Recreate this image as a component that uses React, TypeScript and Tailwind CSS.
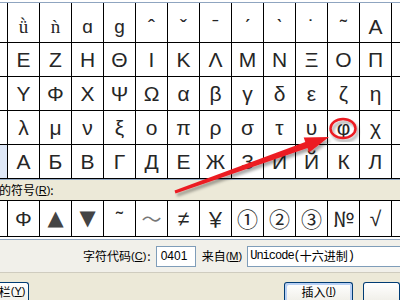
const GRID: string[][] = [
  ["ǜ", "ǹ", "ɑ", "ɡ", "ˆ", "ˇ", "ˉ", "ˊ", "ˋ", "˙", "˜", "Α"],
  ["Ε", "Ζ", "Η", "Θ", "Ι", "Κ", "Λ", "Μ", "Ν", "Ξ", "Ο", "Π"],
  ["Υ", "Φ", "Χ", "Ψ", "Ω", "α", "β", "γ", "δ", "ε", "ζ", "η"],
  ["λ", "μ", "ν", "ξ", "ο", "π", "ρ", "σ", "τ", "υ", "φ", "χ"],
  ["А", "Б", "В", "Г", "Д", "Е", "Ж", "З", "И", "Й", "К", "Л"],
];

const RECENT = ["Φ", "▲", "▼", "˜", "〜", "≠", "￥", "①", "②", "③", "№", "√"];

const glyphFont = "font-['Liberation_Sans','DejaVu_Sans',sans-serif]";
const cjkFont = "font-['Noto_Sans_CJK_SC',sans-serif]";

function Key({ k }: { k: string }) {
  // underlined access key, old dialog style
  return (
    <span className="font-['Liberation_Sans',sans-serif] text-[11px]">
      (<span className="underline">{k}</span>)
    </span>
  );
}

function recentClass(i: number) {
  if (i === 1 || i === 2) return "font-['DejaVu_Sans',sans-serif] text-[21px] text-[#444]";
  if (i === 4) return `${cjkFont} text-[20px] text-[#777]`;
  if (i >= 6 && i <= 10) return `${cjkFont} text-[21px]`;
  return `${glyphFont} text-[21px]`;
}

export default function App() {
  return (
    <div className="relative w-[400px] h-[300px] overflow-hidden bg-[#ece9d8] text-[#262626]">
      <div className="h-[2px] bg-white" />

      {/* character table */}
      <div className="bg-white border-t border-b border-[#8fa5c0]">
        {GRID.map((row, r) => (
          <div
            key={r}
            className={`flex border-b border-black ${r === 0 ? "h-[40px]" : "h-[34px]"}`}
          >
            <div className={`w-[7px] ${r === 4 ? "bg-[#dfe8f7]" : ""}`} />
            {row.map((ch, c) => (
              <div
                key={c}
                className={`w-[32px] border-l border-black flex items-center justify-center leading-none ${
                  r === 0 ? "pt-[8px]" : ""
                } ${
                  r === 0 && c < 2
                    ? "font-['Liberation_Serif',serif] text-[19px]"
                    : r === 0 && c < 4
                    ? `${glyphFont} text-[19px]`
                    : `${glyphFont} text-[21px]`
                }`}
              >
                {ch}
              </div>
            ))}
            <div className="w-[9px] border-l border-black" />
          </div>
        ))}
      </div>

      {/* recently used label */}
      <div className={`h-[20px] flex items-center whitespace-nowrap text-[12px] text-black ${cjkFont}`}>
        <span className="-ml-[1px]">的符号</span>
        <Key k="R" />
        <span>:</span>
      </div>

      {/* recently used row */}
      <div className="bg-white pb-[2px] border-b border-[#8fa5c0]">
        <div className="flex h-[37px] border-t border-b border-black">
          <div className="w-[7px]" />
          {RECENT.map((ch, i) => (
            <div
              key={i}
              className={`w-[32px] border-l border-black flex items-center justify-center leading-none ${recentClass(i)}`}
            >
              {ch}
            </div>
          ))}
          <div className="w-[9px] border-l border-black" />
        </div>
      </div>

      {/* code row */}
      <div className={`h-[32px] bg-[#f1f0ea] flex items-center text-[12px] text-black whitespace-nowrap ${cjkFont}`}>
        <span className="ml-[83px]">字符代码</span>
        <Key k="C" />
        <span className="ml-[1px]">:</span>
        <div className="ml-[5px] w-[40px] h-[21px] bg-white border border-[#7f9db9] flex items-center pl-[4px] font-['Liberation_Sans',sans-serif] text-[12px]">
          0401
        </div>
        <span className="ml-[6px]">来自</span>
        <Key k="M" />
        <div className="ml-[5px] flex-1 h-[21px] bg-white border border-[#7f9db9] border-r-0 flex items-center pl-[2px]">
          <span className="font-['Liberation_Mono',monospace] tracking-[-1px]">Unicode(</span>
          <span>十六进制</span>
          <span className="font-['Liberation_Mono',monospace]">)</span>
        </div>
      </div>

      {/* buttons */}
      <div className={`border-t border-[#cfccbf] pt-[9px] flex text-[12px] text-black whitespace-nowrap ${cjkFont}`}>
        <div className="-ml-[6px] w-[38px] h-[18px] rounded-t-[3px] border border-b-0 border-[#003c74] bg-gradient-to-b from-white to-[#f1f0ea] flex items-center justify-end pr-[3px]">
          <span>栏</span>
          <Key k="Y" />
        </div>
        <div className="ml-[255px] w-[74px] h-[18px] rounded-t-[3px] border border-b-0 border-[#003c74] bg-gradient-to-b from-white to-[#f1f0ea] shadow-[inset_2px_2px_0_0_#b8d0f4,inset_-2px_0_0_0_#b8d0f4] flex items-center justify-center">
          <span>插入</span>
          <Key k="I" />
        </div>
        <div className="ml-[10px] w-[40px] h-[18px] rounded-t-[3px] border border-b-0 border-[#003c74] bg-gradient-to-b from-white to-[#f1f0ea]" />
      </div>

      {/* annotation */}
      <svg className="absolute inset-0 pointer-events-none" width="400" height="300" viewBox="0 0 400 300">
        <defs>
          <filter id="sh" x="-20%" y="-20%" width="140%" height="140%">
            <feDropShadow dx="2" dy="3" stdDeviation="1.5" floodColor="#000" floodOpacity="0.35" />
          </filter>
        </defs>
        <g filter="url(#sh)" fill="#ec1c24">
          <polygon points="175.5,193.4 174.5,190.6 305.3,142.1 303.7,137.6 329,137 309.1,152.6 307.5,148.1" />
        </g>
        <ellipse cx="343" cy="128.5" rx="12.5" ry="9.5" fill="none" stroke="#ec1c24" strokeWidth="2.5" filter="url(#sh)" />
      </svg>
    </div>
  );
}
